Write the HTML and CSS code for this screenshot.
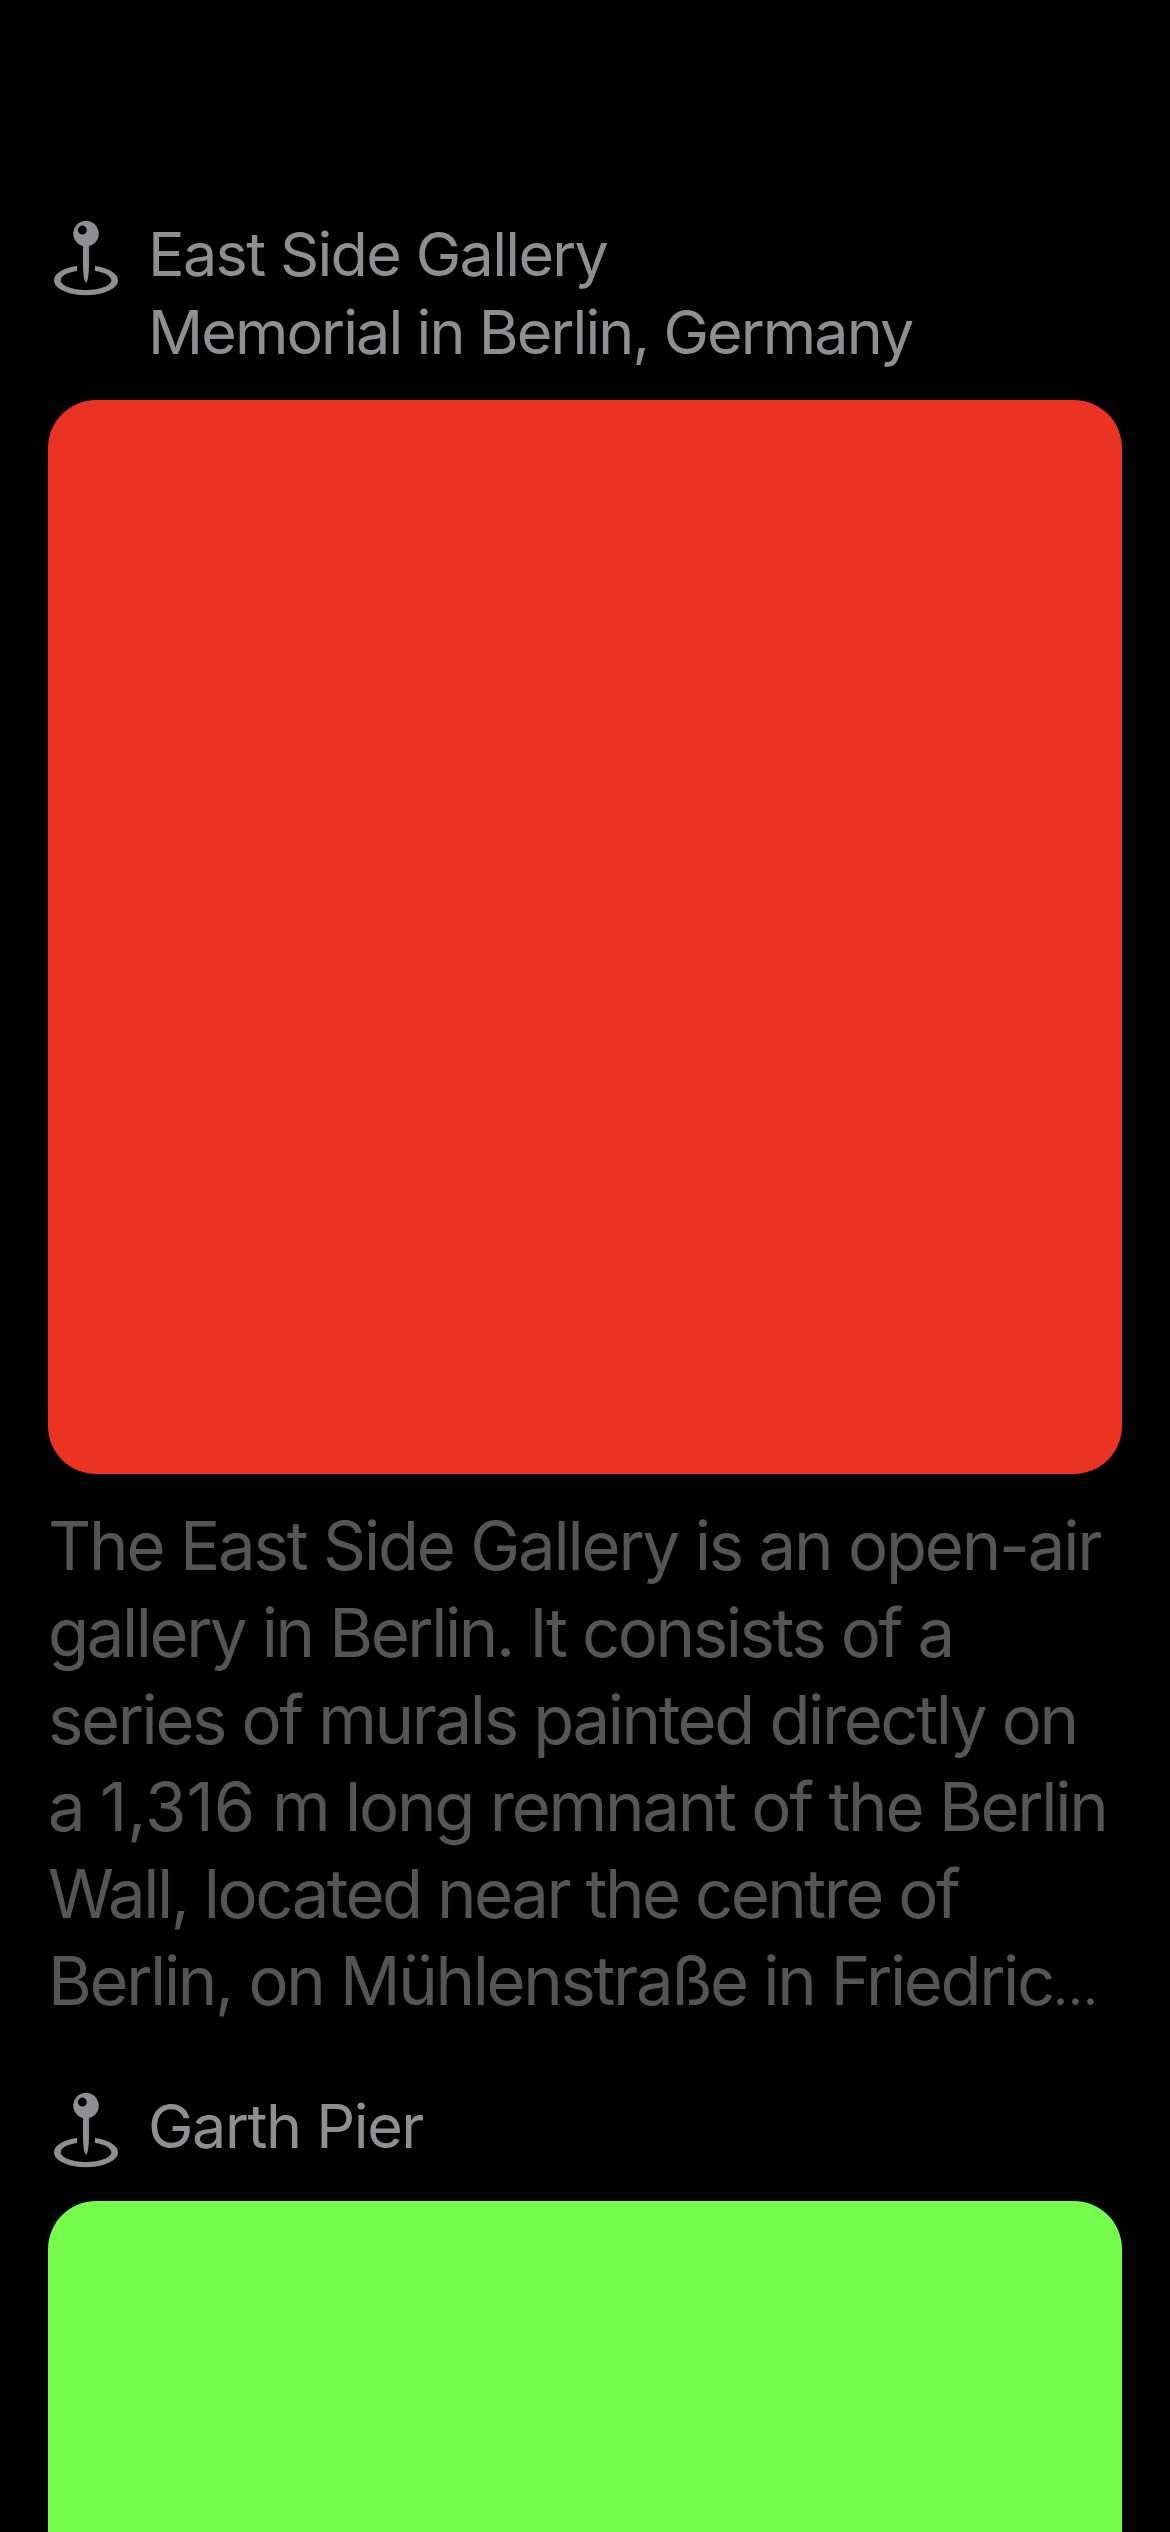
FILE: index.html
```html
<!DOCTYPE html>
<html lang="en">
<head>
  <meta charset="utf-8">
  <title>Landmarks</title>
  <link rel="stylesheet" href="styles.css">
</head>
<body>
  <svg class="symbols" aria-hidden="true">
    <symbol id="pin" viewBox="14 11 64 74.5">
      <path fill-rule="evenodd" d="M49 36.1V55c0 9-1.2 17.4-3 17.4S43 64 43 55V36.1a12.8 12.8 0 1 1 6 0ZM42.3 15.6a4.5 4.5 0 1 0 0 9 4.5 4.5 0 0 0 0-9Z"/>
      <path d="M37 55.9C23.600 57.600 14 63.200 14 70.200 14 78.500 28.300 85.200 46 85.200S78 78.500 78 70.200C78 63.200 68.400 57.600 55 55.900V61C64.500 62.300 71.300 66 71.300 70.200 71.300 75.500 60 79.900 46 79.900S20.700 75.500 20.700 70.200C20.700 66 27.500 62.300 37 61Z"/>
    </symbol>
  </svg>
  <main class="feed">
    <article class="place">
      <header class="label">
        <svg class="icon"><use href="#pin"/></svg>
        <h2 class="title">
          <span class="line east">East Side Gallery</span>
          <span class="line memorial">Memorial in Berlin, Germany</span>
        </h2>
      </header>
      <div class="card red"></div>
      <p class="description">
        <span class="line d1">The East Side Gallery is an open-air</span>
        <span class="line d2">gallery in Berlin. It consists of a</span>
        <span class="line d3">series of murals painted directly on</span>
        <span class="line d4">a <span class="number">1,316</span> m long remnant of the Berlin</span>
        <span class="line d5">Wall, located near the centre of</span>
        <span class="line d6">Berlin, on Mühlenstraße in Friedric<span class="ellipsis">…</span></span>
      </p>
    </article>
    <article class="place">
      <header class="label">
        <svg class="icon"><use href="#pin"/></svg>
        <h2 class="title"><span class="line garth">Garth Pier</span></h2>
      </header>
      <div class="card green"></div>
    </article>
  </main>
</body>
</html>
```
FILE: styles.css
```css
* {
  box-sizing: border-box;
  margin: 0;
}

body {
  background: #000;
  font-family: Inter, "Liberation Sans", sans-serif;
}

.symbols {
  display: none;
}

.feed {
  display: flex;
  flex-direction: column;
  gap: 63px;
  height: 2532px;
  padding: 215px 48px 0;
  overflow: hidden;
}

.place {
  flex: none;
}

.label {
  display: flex;
  align-items: flex-start;
  gap: 30px;
  min-height: 85px;
  margin-bottom: 29px;
  padding-left: 6px;
  color: #8e8e93;
}

.icon {
  flex: none;
  width: 64px;
  height: 74.5px;
  margin-top: 6px;
  fill: currentColor;
}

.title {
  font-size: 61px;
  font-weight: 400;
  line-height: 78px;
}

.line {
  display: block;
  white-space: nowrap;
}

.card {
  height: 1074px;
  border-radius: 48px;
}

.red {
  background: #eb3323;
}

.green {
  background: #75fb4c;
}

.description {
  margin-top: 28px;
  color: #555;
  font-size: 67px;
  line-height: 87px;
}

.east { letter-spacing: -1.65px; }
.memorial { letter-spacing: -1.89px; }
.garth { letter-spacing: -1.43px; }
.d1 { letter-spacing: -2.19px; }
.d2 { letter-spacing: -2.4px; }
.d3 { letter-spacing: -2.38px; }
.d4 { letter-spacing: -2.24px; }
.d5 { letter-spacing: -2.5px; }
.d6 { letter-spacing: -2.36px; }
.number { letter-spacing: 0.1px; }

.ellipsis {
  font-size: 52px;
  line-height: 1;
}
```
